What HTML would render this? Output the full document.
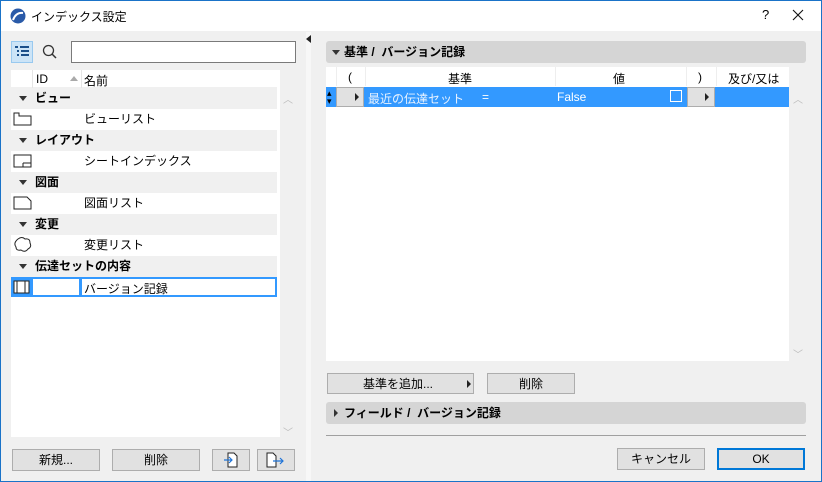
<!DOCTYPE html>
<html><head><meta charset="utf-8"><style>
*{box-sizing:border-box;margin:0;padding:0}
body{width:822px;height:482px;overflow:hidden;background:#f0f0f0;font-family:"Liberation Sans","Noto Sans CJK JP",sans-serif;font-size:12px;color:#000;position:relative}
.a{position:absolute}
.win{left:0;top:0;width:822px;height:482px;border:1px solid #1a73c8}
.title{left:1px;top:1px;width:820px;height:30px;background:#fff}
.btn{position:absolute;background:#e1e1e1;border:1px solid #adadad;text-align:center;line-height:20px;font-size:12px}
.row{position:absolute;left:11px;width:266px;height:21px;line-height:21px}
.grp{background:#f0f0f0;font-weight:bold}
.item{background:#fff}
.tri{display:inline-block;width:0;height:0;border-left:4px solid transparent;border-right:4px solid transparent;border-top:5px solid #333;margin:0 8px 1px 8px;vertical-align:middle}
</style></head><body>
<div class="a win"></div>
<div class="a title"></div>
<svg class="a" style="left:10px;top:8px" width="16" height="16"><circle cx="8" cy="8" r="7.5" fill="#2a5aa8"/><path d="M3 12 Q6 4 13 5" stroke="#fff" stroke-width="2" fill="none"/></svg>
<div class="a" style="left:31px;top:8px;font-size:12px">インデックス設定</div>
<div class="a" style="left:762px;top:7px;font-size:13px">?</div>
<svg class="a" style="left:792px;top:9px" width="12" height="12"><path d="M1 1L11 11M11 1L1 11" stroke="#111" stroke-width="1.1"/></svg>

<!-- left toolbar -->
<div class="a" style="left:11px;top:41px;width:22px;height:22px;background:#cce4f7;border:1px solid #99c9ef"></div>
<svg class="a" style="left:14px;top:45px" width="16" height="14"><g fill="#1a4f8a"><rect x="1" y="1" width="3" height="2"/><rect x="6" y="1" width="9" height="2"/><rect x="3" y="5" width="2" height="2"/><rect x="7" y="5" width="8" height="2"/><rect x="3" y="9" width="2" height="2"/><rect x="7" y="9" width="8" height="2"/></g></svg>
<svg class="a" style="left:42px;top:44px" width="16" height="16"><circle cx="6.5" cy="6.5" r="5" stroke="#333" stroke-width="1.3" fill="none"/><path d="M10 10 L14 14" stroke="#333" stroke-width="1.5"/></svg>
<div class="a" style="left:71px;top:41px;width:225px;height:22px;background:#fff;border:1px solid #7a7a7a"></div>

<!-- list -->
<div class="a" style="left:11px;top:70px;width:269px;height:367px;background:#fff"></div>
<div class="a" style="left:11px;top:70px;width:266px;height:18px;background:#fff;border-bottom:1px solid #f0f0f0"></div>
<div class="a" style="left:32px;top:70px;width:1px;height:18px;background:#e5e5e5"></div>
<div class="a" style="left:81px;top:70px;width:1px;height:18px;background:#e5e5e5"></div>
<div class="a" style="left:36px;top:72px">ID</div>
<div class="a" style="left:70px;top:76px;width:0;height:0;border-left:4px solid transparent;border-right:4px solid transparent;border-bottom:5px solid #aaa"></div>
<div class="a" style="left:84px;top:72px">名前</div>
<div class="a" style="left:283px;top:91px;color:#bbb;font-size:10px">︿</div>
<div class="a" style="left:283px;top:424px;color:#bbb;font-size:10px">﹀</div>

<div class="row grp" style="top:88px"><span class="tri"></span>ビュー</div>
<div class="row item" style="top:109px"><span style="position:absolute;left:73px">ビューリスト</span></div>
<svg class="a" style="left:13px;top:112px" width="20" height="14"><path d="M1 1h5v3h12v9H1z" fill="none" stroke="#222"/></svg>
<div class="row grp" style="top:130px"><span class="tri"></span>レイアウト</div>
<div class="row item" style="top:151px"><span style="position:absolute;left:73px">シートインデックス</span></div>
<svg class="a" style="left:13px;top:154px" width="20" height="14"><path d="M1 1h17v12H1z M10 9h8 M10 9v4" fill="none" stroke="#222"/></svg>
<div class="row grp" style="top:172px"><span class="tri"></span>図面</div>
<div class="row item" style="top:193px"><span style="position:absolute;left:73px">図面リスト</span></div>
<svg class="a" style="left:13px;top:196px" width="20" height="14"><path d="M1 1h13l4 4v8H1z" fill="none" stroke="#222"/></svg>
<div class="row grp" style="top:214px"><span class="tri"></span>変更</div>
<div class="row item" style="top:235px"><span style="position:absolute;left:73px">変更リスト</span></div>
<svg class="a" style="left:13px;top:236px" width="20" height="17"><path d="M5 3 Q9 0 12 3 Q17 2 17 7 Q19 11 15 13 Q12 17 8 14 Q3 15 3 11 Q0 7 5 3z" fill="none" stroke="#222"/></svg>
<div class="row grp" style="top:256px"><span class="tri"></span>伝達セットの内容</div>
<div class="a" style="left:11px;top:277px;width:266px;height:20px;background:#fff;border:2px solid #3399ff"></div>
<div class="a" style="left:11px;top:277px;width:22px;height:20px;background:#3399ff"></div>
<div class="a" style="left:79px;top:277px;width:3px;height:20px;background:#3399ff"></div>
<svg class="a" style="left:13px;top:280px" width="18" height="14"><path d="M1 1h15v12H1z M4 1v12 M12 1v12" fill="#fff" stroke="#222"/></svg>
<div class="a" style="left:84px;top:280px">バージョン記録</div>

<div class="btn" style="left:12px;top:449px;width:88px;height:22px">新規...</div>
<div class="btn" style="left:112px;top:449px;width:88px;height:22px">削除</div>
<div class="btn" style="left:212px;top:449px;width:38px;height:22px"></div>
<div class="btn" style="left:257px;top:449px;width:38px;height:22px"></div>
<svg class="a" style="left:222px;top:451px" width="18" height="18"><path d="M6 2h6l3 3v11H6z" fill="#fff" stroke="#222"/><path d="M2 9h8 M7 6l3 3-3 3" stroke="#1e73d8" fill="none" stroke-width="1.2"/></svg>
<svg class="a" style="left:265px;top:451px" width="22" height="18"><path d="M2 2h6l3 3v11H2z" fill="#fff" stroke="#222"/><path d="M8 10h10 M15 7l3 3-3 3" stroke="#1e73d8" fill="none" stroke-width="1.2"/></svg>

<div class="a" style="left:306px;top:32px;width:5px;height:449px;background:#f7f7f7"></div>
<div class="a" style="left:306px;top:35px;width:0;height:0;border-top:4px solid transparent;border-bottom:4px solid transparent;border-right:5px solid #222"></div>

<!-- right -->
<div class="a" style="left:326px;top:41px;width:480px;height:22px;background:#d5d5d5;border-radius:3px;font-weight:bold;line-height:22px"><span class="tri" style="margin:0 4px 1px 6px"></span>基準 /&nbsp; バージョン記録</div>
<div class="a" style="left:326px;top:67px;width:463px;height:294px;background:#fff"></div>
<div class="a" style="left:336px;top:67px;width:1px;height:19px;background:#eee"></div>
<div class="a" style="left:365px;top:67px;width:1px;height:19px;background:#eee"></div>
<div class="a" style="left:555px;top:67px;width:1px;height:19px;background:#eee"></div>
<div class="a" style="left:686px;top:67px;width:1px;height:19px;background:#eee"></div>
<div class="a" style="left:716px;top:67px;width:1px;height:19px;background:#eee"></div>
<div class="a" style="left:348px;top:70px">(</div>
<div class="a" style="left:448px;top:70px">基準</div>
<div class="a" style="left:613px;top:70px">値</div>
<div class="a" style="left:698px;top:70px">)</div>
<div class="a" style="left:728px;top:70px">及び/又は</div>
<div class="a" style="left:326px;top:87px;width:463px;height:20px;background:#3399ff"></div>
<div class="a" style="left:327px;top:89px;font-size:9px;line-height:8px">▴<br>▾</div>
<div class="a" style="left:336px;top:87px;width:28px;height:20px;background:#e1e1e1;border:1px solid #adadad"></div>
<div class="a" style="left:355px;top:93px;border-top:4px solid transparent;border-bottom:4px solid transparent;border-left:4px solid #222"></div>
<div class="a" style="left:368px;top:90px;color:#e8f2ff">最近の伝達セット</div>
<div class="a" style="left:482px;top:90px;color:#fff">=</div>
<div class="a" style="left:557px;top:90px;color:#fff">False</div>
<div class="a" style="left:670px;top:90px;width:12px;height:12px;border:1px solid #fff"></div>
<div class="a" style="left:687px;top:87px;width:28px;height:20px;background:#e1e1e1;border:1px solid #adadad"></div>
<div class="a" style="left:705px;top:93px;border-top:4px solid transparent;border-bottom:4px solid transparent;border-left:4px solid #222"></div>
<div class="a" style="left:793px;top:91px;color:#bbb;font-size:10px">︿</div>
<div class="a" style="left:793px;top:346px;color:#bbb;font-size:10px">﹀</div>

<div class="btn" style="left:327px;top:373px;width:147px;height:21px;text-align:left;padding-left:35px">基準を追加...<span style="position:absolute;left:139px;top:6px;border-top:4px solid transparent;border-bottom:4px solid transparent;border-left:4px solid #222"></span></div>
<div class="btn" style="left:487px;top:373px;width:88px;height:21px">削除</div>
<div class="a" style="left:326px;top:402px;width:480px;height:22px;background:#d5d5d5;border-radius:3px;font-weight:bold;line-height:22px"><span style="display:inline-block;margin:0 6px 1px 8px;border-top:4px solid transparent;border-bottom:4px solid transparent;border-left:4px solid #333;vertical-align:middle"></span>フィールド /&nbsp; バージョン記録</div>
<div class="a" style="left:326px;top:435px;width:480px;height:1px;background:#a0a0a0"></div>
<div class="btn" style="left:617px;top:448px;width:88px;height:22px">キャンセル</div>
<div class="btn" style="left:717px;top:448px;width:88px;height:22px;border:2px solid #0078d7;line-height:18px">OK</div>
</body></html>
